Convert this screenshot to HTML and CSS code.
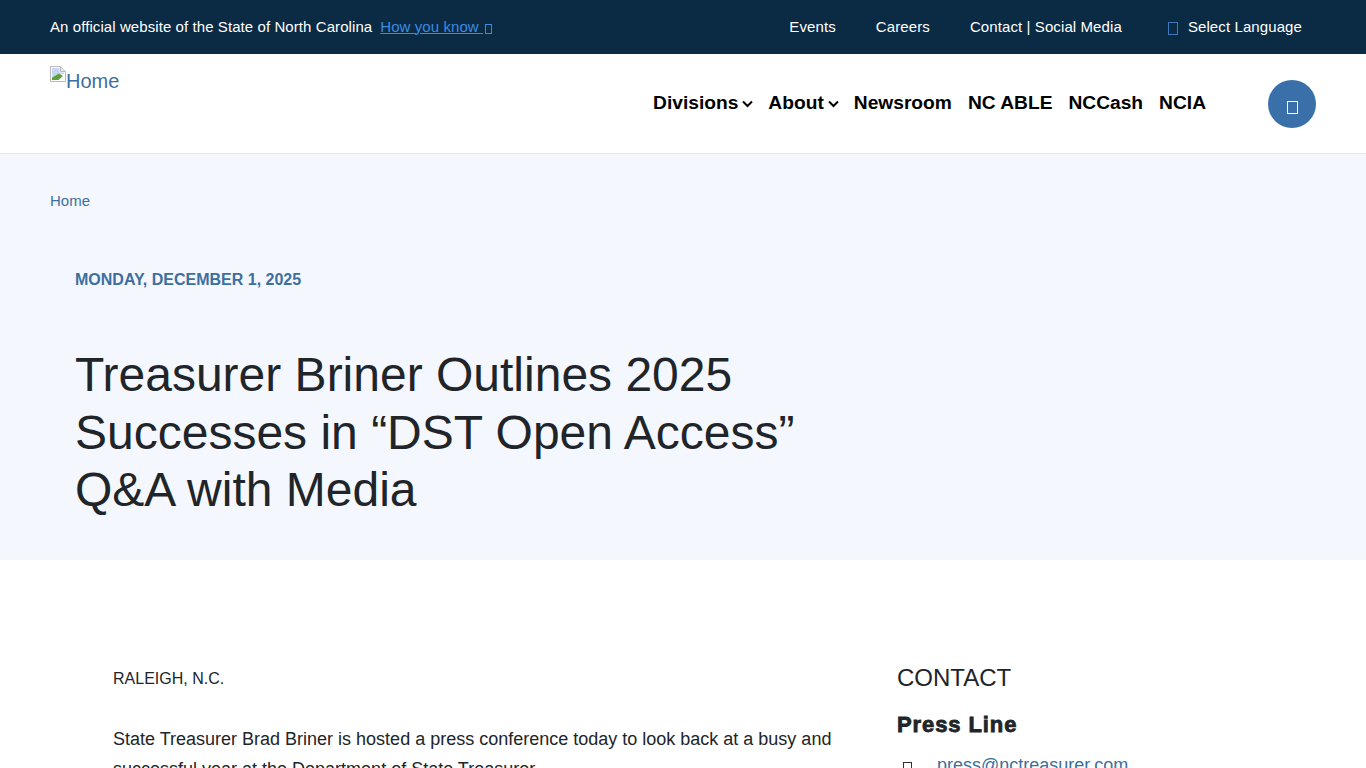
FILE: index.html
```html
<!DOCTYPE html>
<html lang="en">
<head>
<meta charset="utf-8">
<title>Treasurer Briner Outlines 2025 Successes in “DST Open Access” Q&amp;A with Media</title>
<link rel="stylesheet" href="styles.css">
</head>
<body>
<div class="page">
  <div class="topbar">
    <div class="official">
      <span class="official-text">An official website of the State of North Carolina</span>
      <a class="know" href="#">How you know <i class="tofu tofu-know"></i></a>
    </div>
    <nav class="toplinks">
      <a href="#">Events</a>
      <a href="#">Careers</a>
      <a href="#">Contact | Social Media</a>
      <a class="lang" href="#"><i class="tofu tofu-lang"></i>Select Language</a>
    </nav>
  </div>
  <header class="header">
    <a class="logo" href="#">
      <svg class="broken" width="16" height="16" viewBox="0 0 16 16" aria-hidden="true">
        <path d="M0.5 0.5H10.5L15.5 5.5V15.5H0.5Z" fill="#fff" stroke="#b9b9b9"/>
        <path d="M10.5 0.5V5.5H15.5" fill="#e8e8e8" stroke="#b9b9b9"/>
        <path d="M2 2H9.5V6.5H14V8L9 8L2 11Z" fill="#c5d5f3"/>
        <path d="M2 14V11.5L9 7.5L13 10L8.5 14Z" fill="#5da13f"/>
        <path d="M9 14L13.5 10.5L14 14Z" fill="#fff"/>
      </svg><span>Home</span>
    </a>
    <nav class="mainnav">
      <a class="caret-item" href="#">Divisions<svg class="caret" width="11" height="8" viewBox="0 0 11 8"><path d="M1 1.5L5.5 6L10 1.5" fill="none" stroke="#000" stroke-width="2"/></svg></a>
      <a class="caret-item" href="#">About<svg class="caret" width="11" height="8" viewBox="0 0 11 8"><path d="M1 1.5L5.5 6L10 1.5" fill="none" stroke="#000" stroke-width="2"/></svg></a>
      <a href="#">Newsroom</a>
      <a href="#">NC ABLE</a>
      <a href="#">NCCash</a>
      <a href="#">NCIA</a>
    </nav>
    <button class="search" type="button" aria-label="Search"><i class="tofu tofu-search"></i></button>
  </header>
  <section class="hero">
    <a class="crumb" href="#">Home</a>
    <div class="hero-body">
      <p class="date">MONDAY, DECEMBER 1, 2025</p>
      <h1>Treasurer Briner Outlines 2025 Successes in “DST Open Access” Q&amp;A with Media</h1>
    </div>
  </section>
  <main class="content">
    <article class="article">
      <p class="dateline">RALEIGH, N.C.</p>
      <p class="lead">State Treasurer Brad Briner is hosted a press conference today to look back at a busy and successful year at the Department of State Treasurer.</p>
    </article>
    <aside class="contact">
      <h2>CONTACT</h2>
      <h3>Press Line</h3>
      <div class="mail"><i class="tofu tofu-mail"></i><a href="#">press@nctreasurer.com</a></div>
    </aside>
  </main>
</div>
</body>
</html>
```
FILE: styles.css
```css
* { box-sizing: border-box; }
html, body { margin: 0; padding: 0; }
body { font-family: "Liberation Sans", Arial, sans-serif; color: #212529; background: #fff; }
a { text-decoration: none; }
.page { height: 100vh; overflow: hidden; }
.tofu { display: inline-block; border: 1px solid currentColor; font-style: normal; }

.topbar { height: 54px; background: #0b2a44; color: #fff; font-size: 15px; display: flex; align-items: center; justify-content: space-between; padding: 0 64px 2px 50px; }
.official { display: flex; align-items: center; gap: 8px; }
.official-text { letter-spacing: 0.08px; }
.know { color: #3b8be0; text-decoration: underline; letter-spacing: 0.08px; }
.tofu-know { width: 7px; height: 10px; vertical-align: -2px; margin-left: 2px; }
.toplinks { display: flex; gap: 40px; align-items: center; letter-spacing: 0.1px; }
.toplinks a { color: #fff; }
.lang { display: flex; align-items: center; margin-left: 6px; }
.tofu-lang { width: 10px; height: 13px; color: #3a78c0; margin-right: 10px; position: relative; top: 2px; }

.header { height: 100px; border-bottom: 1px solid #dfe9f1; display: flex; align-items: flex-start; padding: 0 50px; position: relative; }
.logo { color: #3d6f9e; font-size: 20px; display: flex; align-items: flex-start; padding-top: 12px; line-height: 30px; }
.broken { flex: none; }
.mainnav { display: flex; align-items: center; gap: 16px; margin-left: auto; margin-right: 62px; height: 98px; font-size: 19.2px; font-weight: 700; }
.mainnav a { color: #000; }
.caret-item { display: flex; align-items: center; }
.caret { margin-left: 4px; margin-right: -1px; position: relative; top: 1px; }
.search { width: 48px; height: 48px; border-radius: 50%; border: 0; padding: 0; background: #3a70aa; color: #fff; margin-top: 26px; display: flex; align-items: center; justify-content: center; flex: none; }
.tofu-search { width: 11px; height: 13px; position: relative; top: 3px; }

.hero { height: 406px; background: #f4f8fe; padding: 39px 50px 0; }
.crumb { display: block; color: #3d6f9e; font-size: 15px; line-height: 16px; }
.hero-body { padding: 59px 0 0 25px; }
.date { margin: 0; font-size: 16px; line-height: 24px; font-weight: 700; color: #3d6f9e; }
h1 { margin: 54px 0 0; width: 760px; font-size: 48px; line-height: 57.6px; font-weight: 400; color: #212529; }

.content { display: flex; padding: 103px 0 0 113px; }
.article { width: 784px; flex: none; }
.dateline { margin: 1px 0 30px; font-size: 16px; line-height: 30px; }
.lead { margin: 0; width: 730px; font-size: 18px; line-height: 30px; }
.contact { font-size: 18px; }
h2 { margin: 0; font-size: 24px; line-height: 30px; font-weight: 400; }
h3 { margin: 19px 0 0; font-size: 22px; line-height: 25px; font-weight: 900; -webkit-text-stroke: 0.8px #212529; letter-spacing: 0.9px; }
.mail { display: flex; align-items: center; margin-top: 13px; line-height: 30px; }
.mail a { color: #3d6f9e; }
.tofu-mail { width: 9px; height: 11px; margin: 0 25px 0 6px; color: #333; position: relative; top: 2px; }
```
